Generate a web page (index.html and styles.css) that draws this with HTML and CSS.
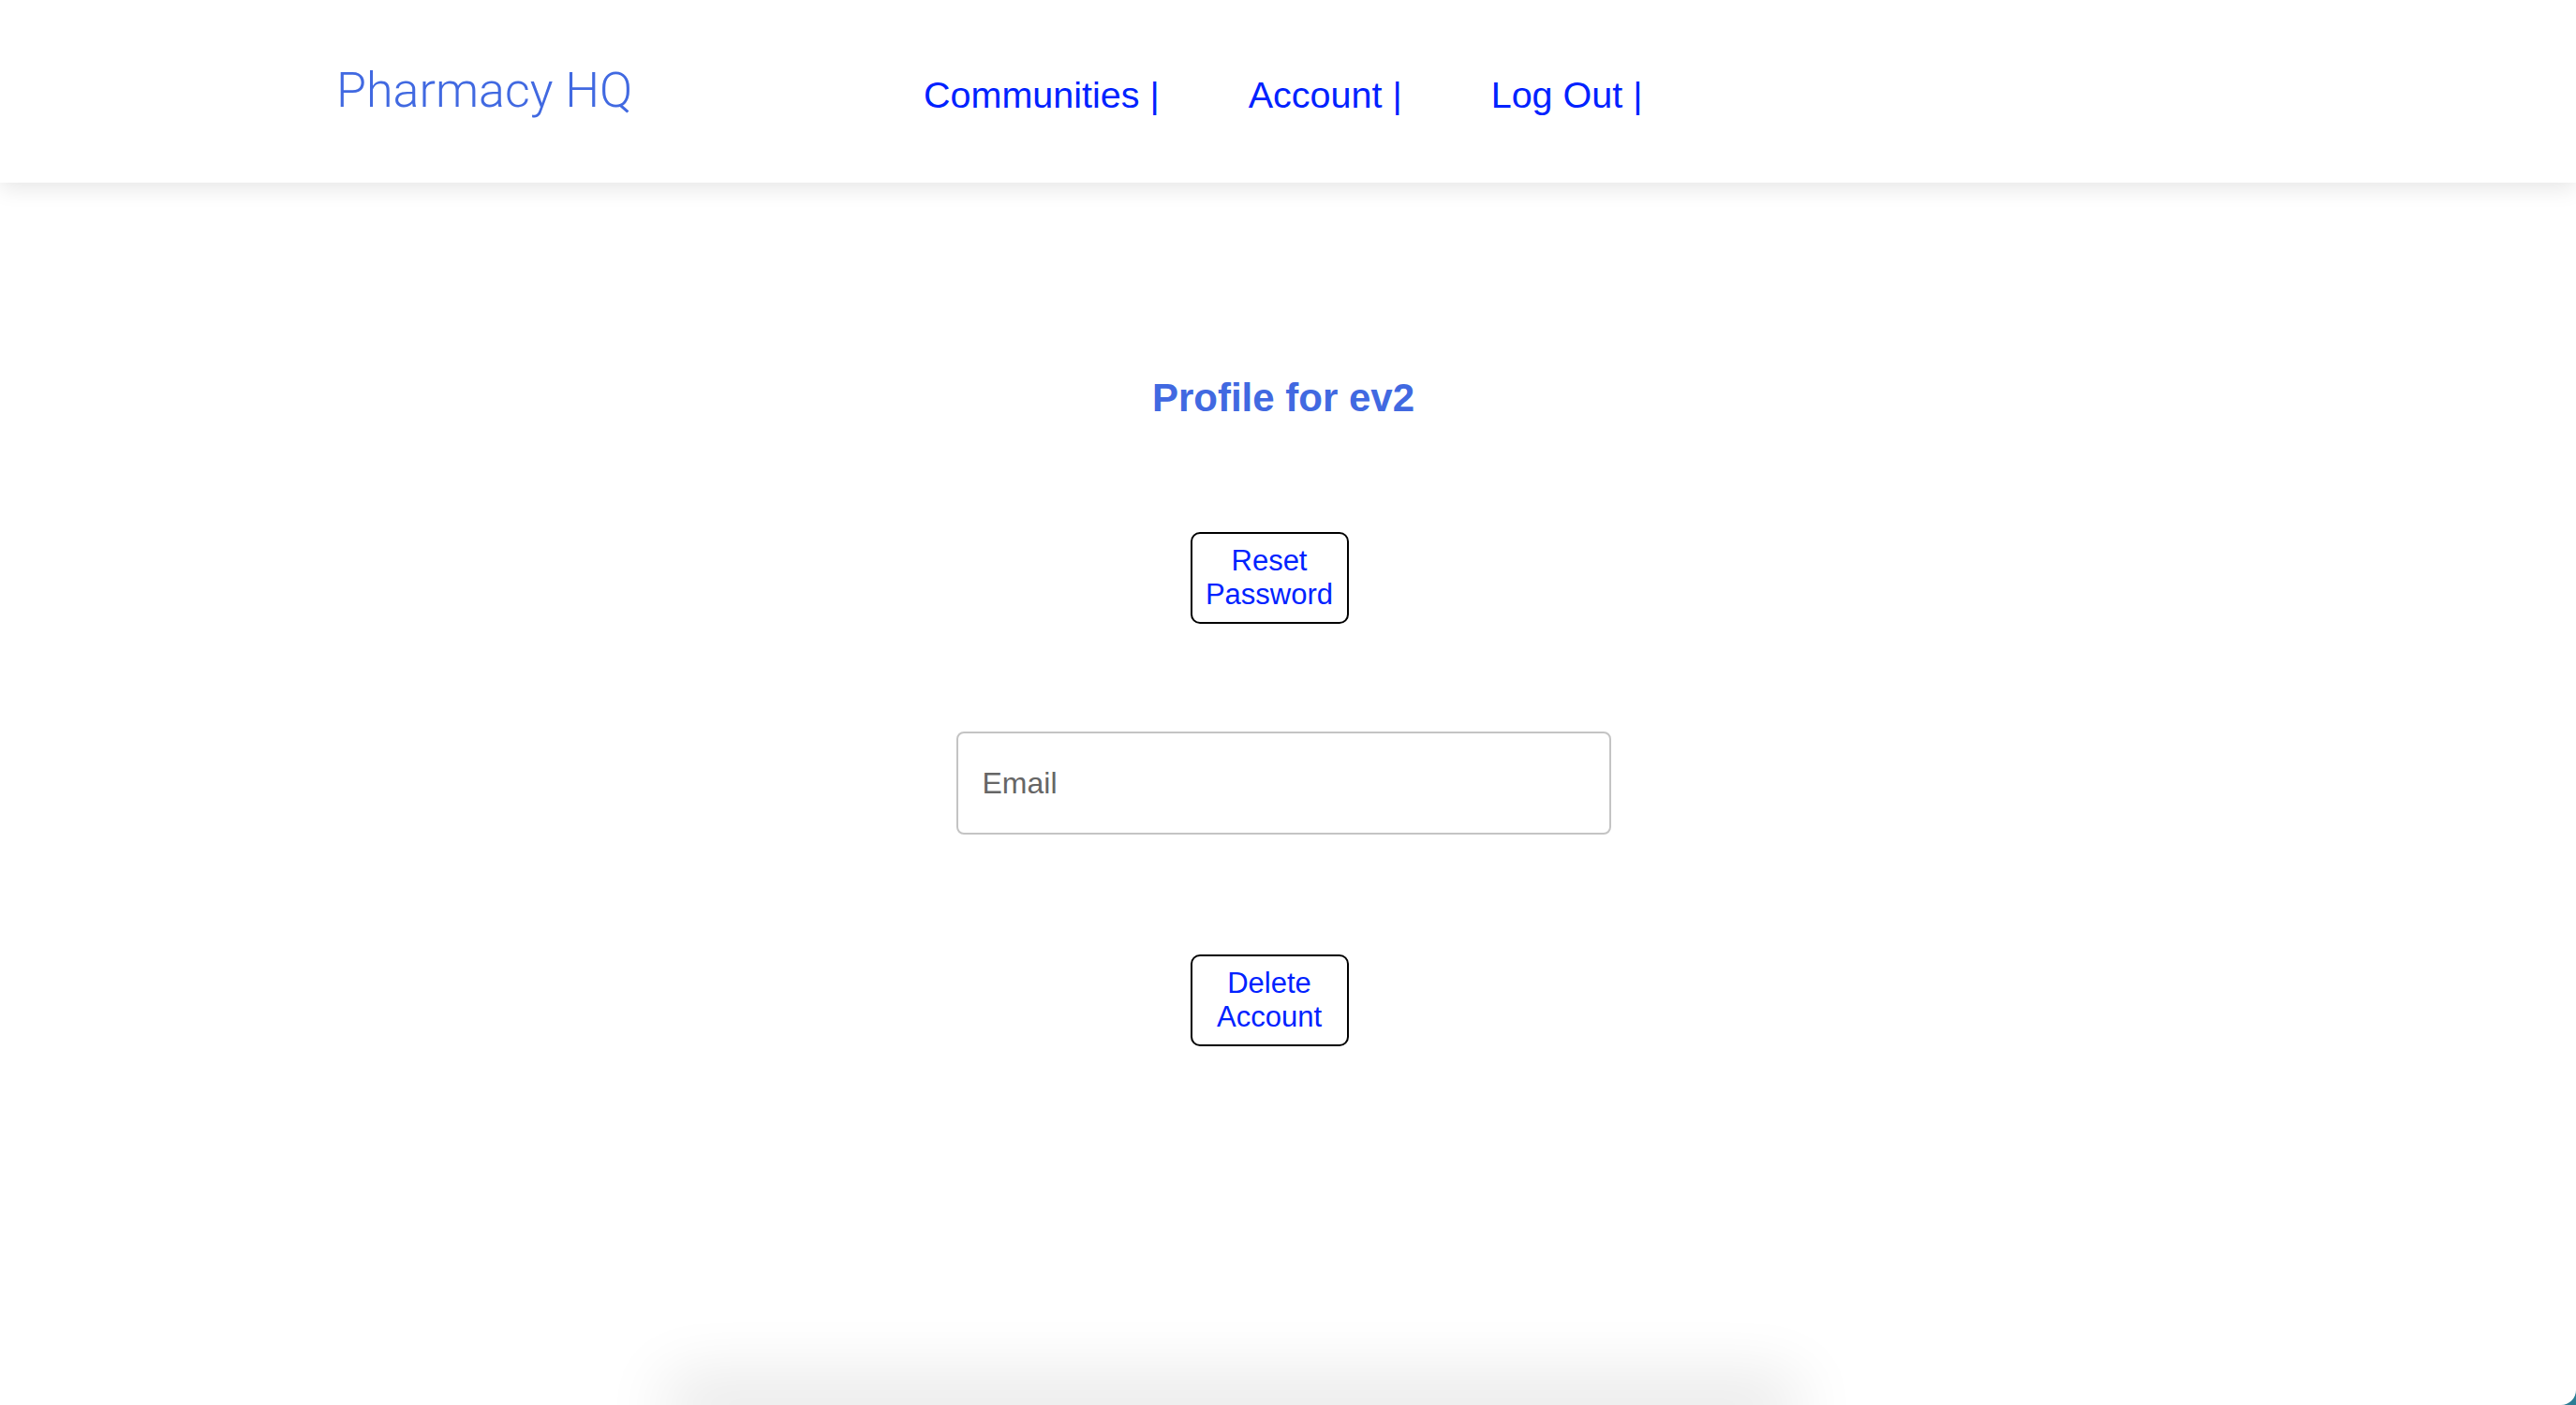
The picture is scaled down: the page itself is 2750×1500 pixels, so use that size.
FILE: index.html
```html
<!DOCTYPE html>
<html lang="en">

<head>
    <meta charset="UTF-8">
    <meta name="viewport" content="width=device-width, initial-scale=1.0">
    <title>Pharmacy HQ: Profile</title>
    <link rel="stylesheet" href="styles.css">
</head>

<body>

    <div class="page">

        <header class="top-bar">
            <div class="brand">Pharmacy HQ</div>
            <nav class="nav-links">
                <a href="#">Communities |</a>
                <a href="#">Account |</a>
                <a href="#">Log Out |</a>
            </nav>
        </header>

        <main class="profile">
            <h1 class="profile-title">Profile for ev2</h1>

            <button type="button" class="outline-btn reset-btn">Reset Password</button>

            <input type="email" class="email-input" placeholder="Email">

            <button type="button" class="outline-btn delete-btn">Delete Account</button>
        </main>

        <div class="footer-shade"></div>

    </div>

</body>

</html>
```

FILE: styles.css
```css
:root {
    --brand-blue: #4169e1;
    --link-blue: #0022ff;
    --header-height: 195px;
}

* {
    margin: 0;
    padding: 0;
    box-sizing: border-box;
}

html {
    background-color: #2b7d94;
}

body {
    font-family: "Liberation Sans", Arial, sans-serif;
}

.page {
    display: flex;
    flex-direction: column;
    min-height: 100vh;
    background-color: #fff;
    border-radius: 0 0 16px 0;
    overflow: hidden;
}

/* header */

.top-bar {
    position: relative;
    z-index: 1;
    display: flex;
    align-items: center;
    height: var(--header-height);
    padding: 8px 0 0 359px;
    background-color: #fff;
    box-shadow: 0 6px 22px rgba(0, 0, 0, 0.1);
}

.brand {
    width: 627px;
    margin-bottom: 10px;
    font-family: "Roboto", "Liberation Sans", sans-serif;
    font-weight: 300;
    font-size: 52px;
    color: var(--brand-blue);
}

.nav-links {
    display: flex;
    gap: 95px;
}

.nav-links a {
    font-size: 39.5px;
    color: var(--link-blue);
    text-decoration: none;
}

/* profile */

.profile {
    flex: 1;
    display: flex;
    flex-direction: column;
    align-items: center;
    padding: 205px 10px 0 0;
}

.profile-title {
    font-size: 42px;
    line-height: 50px;
    font-weight: bold;
    color: var(--brand-blue);
}

.outline-btn {
    width: 169px;
    height: 98px;
    padding: 11px 0;
    margin-right: 30px;
    border: 2px solid #000;
    border-radius: 10px;
    background-color: #fff;
    font-family: "Liberation Sans", Arial, sans-serif;
    font-size: 31px;
    line-height: 36px;
    color: var(--link-blue);
    cursor: pointer;
}

.reset-btn {
    margin-top: 118px;
}

.email-input {
    width: 699px;
    height: 110px;
    margin-top: 115px;
    padding: 0 26px;
    border: 2px solid #c4c4c4;
    border-radius: 8px;
    font-family: "Liberation Sans", Arial, sans-serif;
    font-size: 32px;
    color: #333;
}

.email-input::placeholder {
    color: #666;
}

.email-input:focus {
    border-color: #4169e1;
    outline: none;
}

.delete-btn {
    margin-top: 128px;
}

/* the shadow of the footer peeking in at the bottom */
.footer-shade {
    width: 1150px;
    height: 0;
    margin-left: 740px;
    box-shadow: 0 0 70px 28px rgba(0, 0, 0, 0.11);
}
```
